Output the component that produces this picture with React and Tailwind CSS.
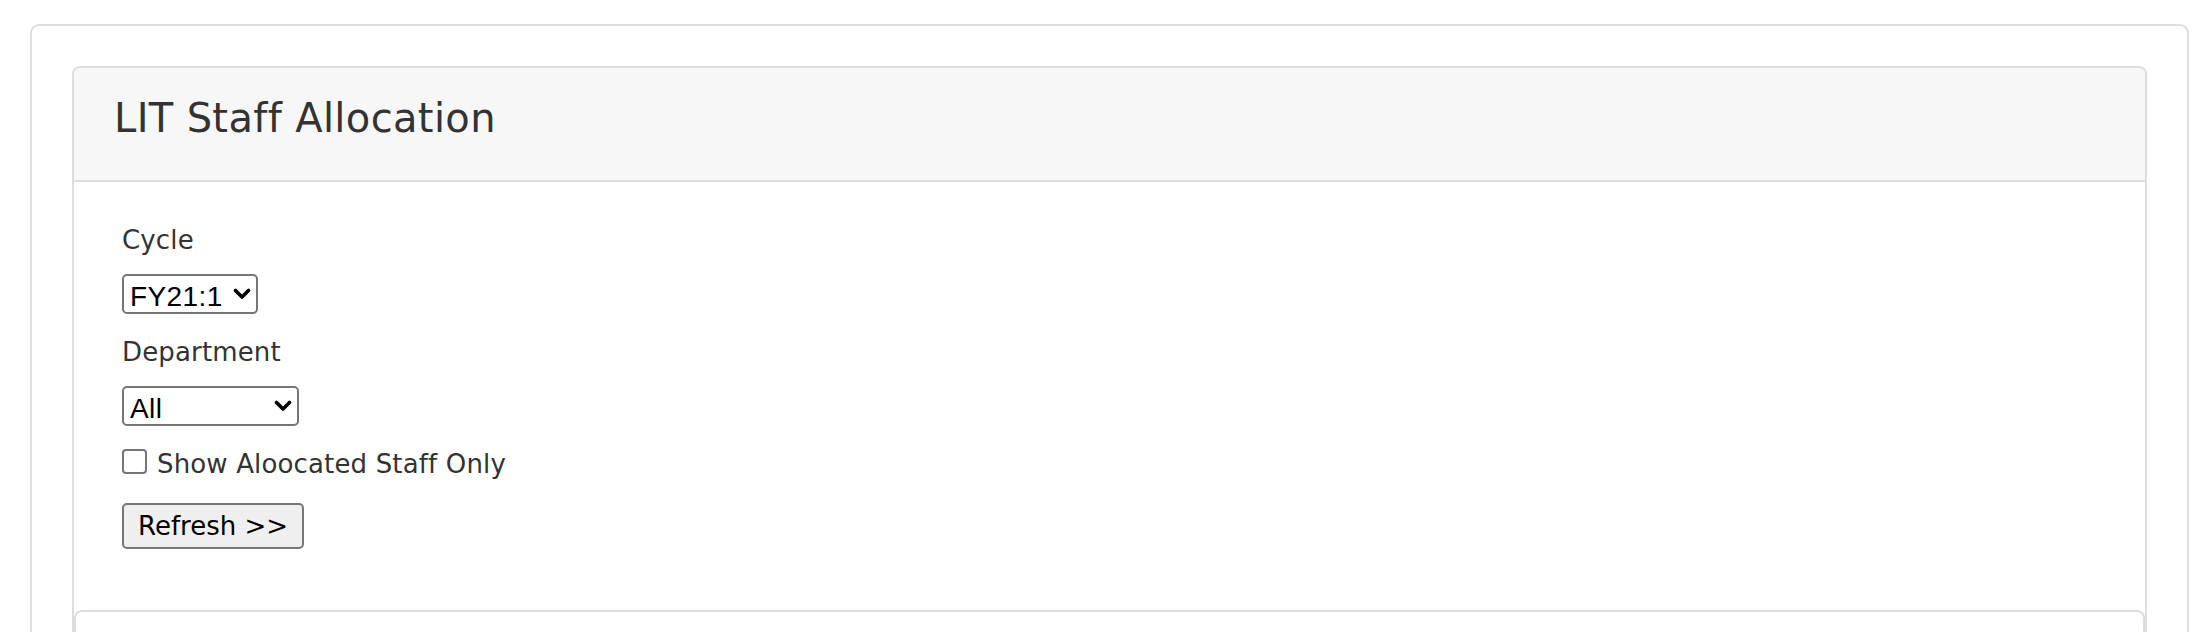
import React from "react";

function Chevron() {
  return (
    <svg
      width="18"
      height="12"
      viewBox="0 0 18 12"
      className="pointer-events-none absolute right-[7px] top-1/2 -translate-y-1/2"
    >
      <polyline
        points="2.5,2.5 9,9 15.5,2.5"
        fill="none"
        stroke="#000"
        strokeWidth="3.6"
        strokeLinecap="round"
        strokeLinejoin="round"
      />
    </svg>
  );
}

function Select({ width, value, options }) {
  return (
    <div className={`relative h-[40px] ${width}`}>
      <select
        defaultValue={value}
        className="h-full w-full appearance-none rounded-[5px] border-2 border-[#767676] bg-white pl-[6px] font-['Liberation_Sans',Arial,sans-serif] text-[28px] tracking-[0.4px] text-black outline-none"
      >
        {options.map((o) => (
          <option key={o} value={o}>
            {o}
          </option>
        ))}
      </select>
      <Chevron />
    </div>
  );
}

export default function App() {
  return (
    <div className="min-h-screen bg-white pl-[30px] pr-[11px] pt-[24px] font-['DejaVu_Sans',Verdana,sans-serif] text-[#333]">
      <div className="rounded-[9px] border-2 border-[#dedede] p-[40px]">
        <div className="rounded-[8px] border-2 border-[#dddddd]">
          <div className="rounded-t-[6px] border-b-2 border-[#dddddd] bg-[#f7f7f7] pb-[40px] pl-[40px] pt-[28px]">
            <h3 className="text-[40px] font-normal leading-[44px] tracking-[0.35px]">LIT Staff Allocation</h3>
          </div>
          <div className="pb-[61px] pl-[48px] pt-[40px] tracking-[0.15px]">
            <div className="text-[26px] leading-[37px]">Cycle</div>
            <div className="mt-[15px]">
              <Select width="w-[136px]" value="FY21:1" options={["FY21:1", "FY20:2", "FY20:1"]} />
            </div>
            <div className="mt-[20px] text-[26px] leading-[37px]">Department</div>
            <div className="mt-[15px]">
              <Select width="w-[177px]" value="All" options={["All"]} />
            </div>
            <label className="mt-[20px] flex items-start gap-[10px] text-[26px] leading-[37px]">
              <input
                type="checkbox"
                className="mt-[3px] h-[25px] w-[25px] appearance-none rounded-[4px] border-2 border-[#767676] bg-white"
              />
              <span>Show Aloocated Staff Only</span>
            </label>
            <div className="mt-[20px]">
              <button className="h-[46px] w-[182px] rounded-[5px] border-2 border-[#767676] bg-[#efefef] text-[26px] leading-[26px] tracking-normal text-black">
                Refresh &gt;&gt;
              </button>
            </div>
          </div>
          <div className="h-[200px] rounded-t-[8px] border-2 border-[#dddddd]"></div>
        </div>
      </div>
    </div>
  );
}
